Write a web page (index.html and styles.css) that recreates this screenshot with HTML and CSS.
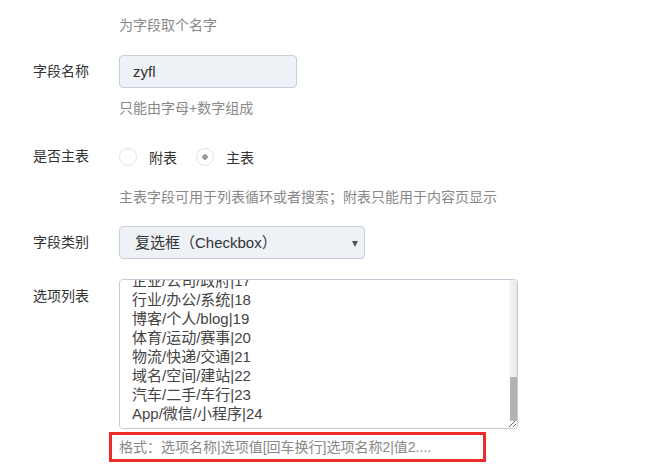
FILE: index.html
```html
<!DOCTYPE html>
<html lang="zh-CN">
<head>
    <meta charset="UTF-8">
    <meta name="viewport" content="width=device-width, initial-scale=1.0">
    <title>字段设置</title>
    <link rel="stylesheet" href="styles.css">
</head>
<body>
    <div class="form">
        <div class="form-item form-item--first">
            <label class="form-label"></label>
            <div class="form-block">
                <p class="tip tip--solo">为字段取个名字</p>
            </div>
        </div>

        <div class="form-item">
            <label class="form-label" for="name">字段名称</label>
            <div class="form-block">
                <input type="text" id="name" class="input" value="zyfl">
                <p class="tip">只能由字母+数字组成</p>
            </div>
        </div>

        <div class="form-item">
            <label class="form-label">是否主表</label>
            <div class="form-block">
                <div class="radio-group">
                    <label class="radio"><input type="radio" name="main" value="0"><span>附表</span></label>
                    <label class="radio"><input type="radio" name="main" value="1" checked><span>主表</span></label>
                </div>
                <p class="tip tip--wide">主表字段可用于列表循环或者搜索；附表只能用于内容页显示</p>
            </div>
        </div>

        <div class="form-item form-item--tight">
            <label class="form-label" for="type">字段类别</label>
            <div class="form-block">
                <div class="select-wrap">
                    <select id="type" class="select">
                        <option>单行文本（Text）</option>
                        <option selected>复选框（Checkbox）</option>
                        <option>单选框（Radio）</option>
                        <option>下拉框（Select）</option>
                    </select>
                </div>
            </div>
        </div>

        <div class="form-item">
            <label class="form-label form-label--top" for="options">选项列表</label>
            <div class="form-block">
                <div class="textarea-wrap">
                    <textarea id="options" class="textarea">门户/综合/资讯|1
新闻/媒体/传媒|2
电商/购物/商城|3
教育/培训/学校|4
医疗/健康/医院|5
旅游/酒店/出行|6
房产/家居/装修|7
金融/理财/保险|8
游戏/动漫/娱乐|9
音乐/影视/视频|10
美食/餐饮/外卖|11
招聘/求职/人才|12
农业/养殖/种植|13
科技/数码/电子|14
工业/制造/机械|15
服装/鞋包/饰品|16
企业/公司/政府|17
行业/办公/系统|18
博客/个人/blog|19
体育/运动/赛事|20
物流/快递/交通|21
域名/空间/建站|22
汽车/二手/车行|23
App/微信/小程序|24</textarea>
                    <div class="scrollbar"><div class="scrollbar-thumb"></div></div>
                </div>
                <p class="tip tip--mark">格式：选项名称|选项值[回车换行]选项名称2|值2....</p>
            </div>
        </div>
    </div>

    <script src="script.js"></script>
</body>
</html>
```

FILE: styles.css
```css
body {
    margin: 0;
    padding: 0 0 0 33px;
    font-family: "Liberation Sans", "Noto Sans CJK SC", sans-serif;
    font-size: 14px;
    color: #333;
    background: #fff;
}
.form-item {
    display: flex;
    margin-top: 20px;
}
.form-item--first {
    margin-top: 13px;
}
.form-item--first + .form-item {
    margin-top: 18px;
}
.form-item--tight {
    margin-top: 17px;
}
.form-label {
    width: 86px;
    flex: none;
    line-height: 33px;
    color: #333;
}
.form-label--top {
    line-height: 20px;
    padding-top: 7px;
}
.form-block {
    flex: 1;
}
.tip {
    margin: 8px 0 0;
    line-height: 24px;
    color: #888;
    font-size: 14px;
}
.tip--solo {
    margin-top: 0;
}
.tip--wide {
    margin-top: 12px;
}
.tip--mark {
    margin: 3px 0 0 -10px;
    width: 364px;
    padding: 0 0 0 7px;
    border: 3px solid #ec2b2b;
    color: #888;
}
.input, .select {
    box-sizing: border-box;
    height: 33px;
    border: 1px solid #c9ced8;
    border-radius: 4px;
    background: #eef1f6;
    font-family: inherit;
    font-size: 15px;
    color: #333;
    outline: none;
}
.input {
    width: 178px;
    padding: 0 13px;
}
.radio-group {
    display: flex;
    align-items: center;
    height: 33px;
}
.radio {
    display: flex;
    align-items: center;
    margin-right: 19px;
    color: #333;
}
.radio input {
    appearance: none;
    -webkit-appearance: none;
    width: 18px;
    height: 18px;
    margin: 0 12px 0 0;
    border: 1px solid #e2e2e2;
    border-radius: 50%;
    background: #fff;
}
.radio input:checked {
    background: radial-gradient(circle, #9a9a9a 0 2.5px, #fff 3px);
}
.select-wrap {
    position: relative;
    width: 246px;
}
.select-wrap::after {
    content: "";
    position: absolute;
    right: 7px;
    top: 15px;
    border-left: 3px solid transparent;
    border-right: 3px solid transparent;
    border-top: 6px solid #555;
}
.select {
    appearance: none;
    -webkit-appearance: none;
    width: 100%;
    padding: 0 24px 0 15px;
}
.textarea-wrap {
    position: relative;
    width: 399px;
}
.textarea {
    box-sizing: border-box;
    display: block;
    width: 399px;
    height: 150px;
    margin: 0;
    padding: 5px 20px 5px 12px;
    border: 1px solid #c5ccd8;
    border-radius: 4px;
    font-family: inherit;
    font-size: 15px;
    line-height: 19px;
    color: #444;
    outline: none;
}
/* 假滚动条，截图里不显示原生的 */
.scrollbar {
    position: absolute;
    right: 1px;
    top: 1px;
    bottom: 8px;
    width: 8px;
    background: linear-gradient(to right, #f7f7f7, #e6e6e6);
    border-left: 1px solid #fafafa;
    box-sizing: border-box;
}
.scrollbar-thumb {
    position: absolute;
    left: 0;
    right: 0;
    bottom: 0;
    height: 44px;
    background: #b3b3b3;
}
```

FILE: script.js
```js
// 选项列表默认滚到最后
var box = document.getElementById('options');
box.scrollTop = box.scrollHeight;
```
